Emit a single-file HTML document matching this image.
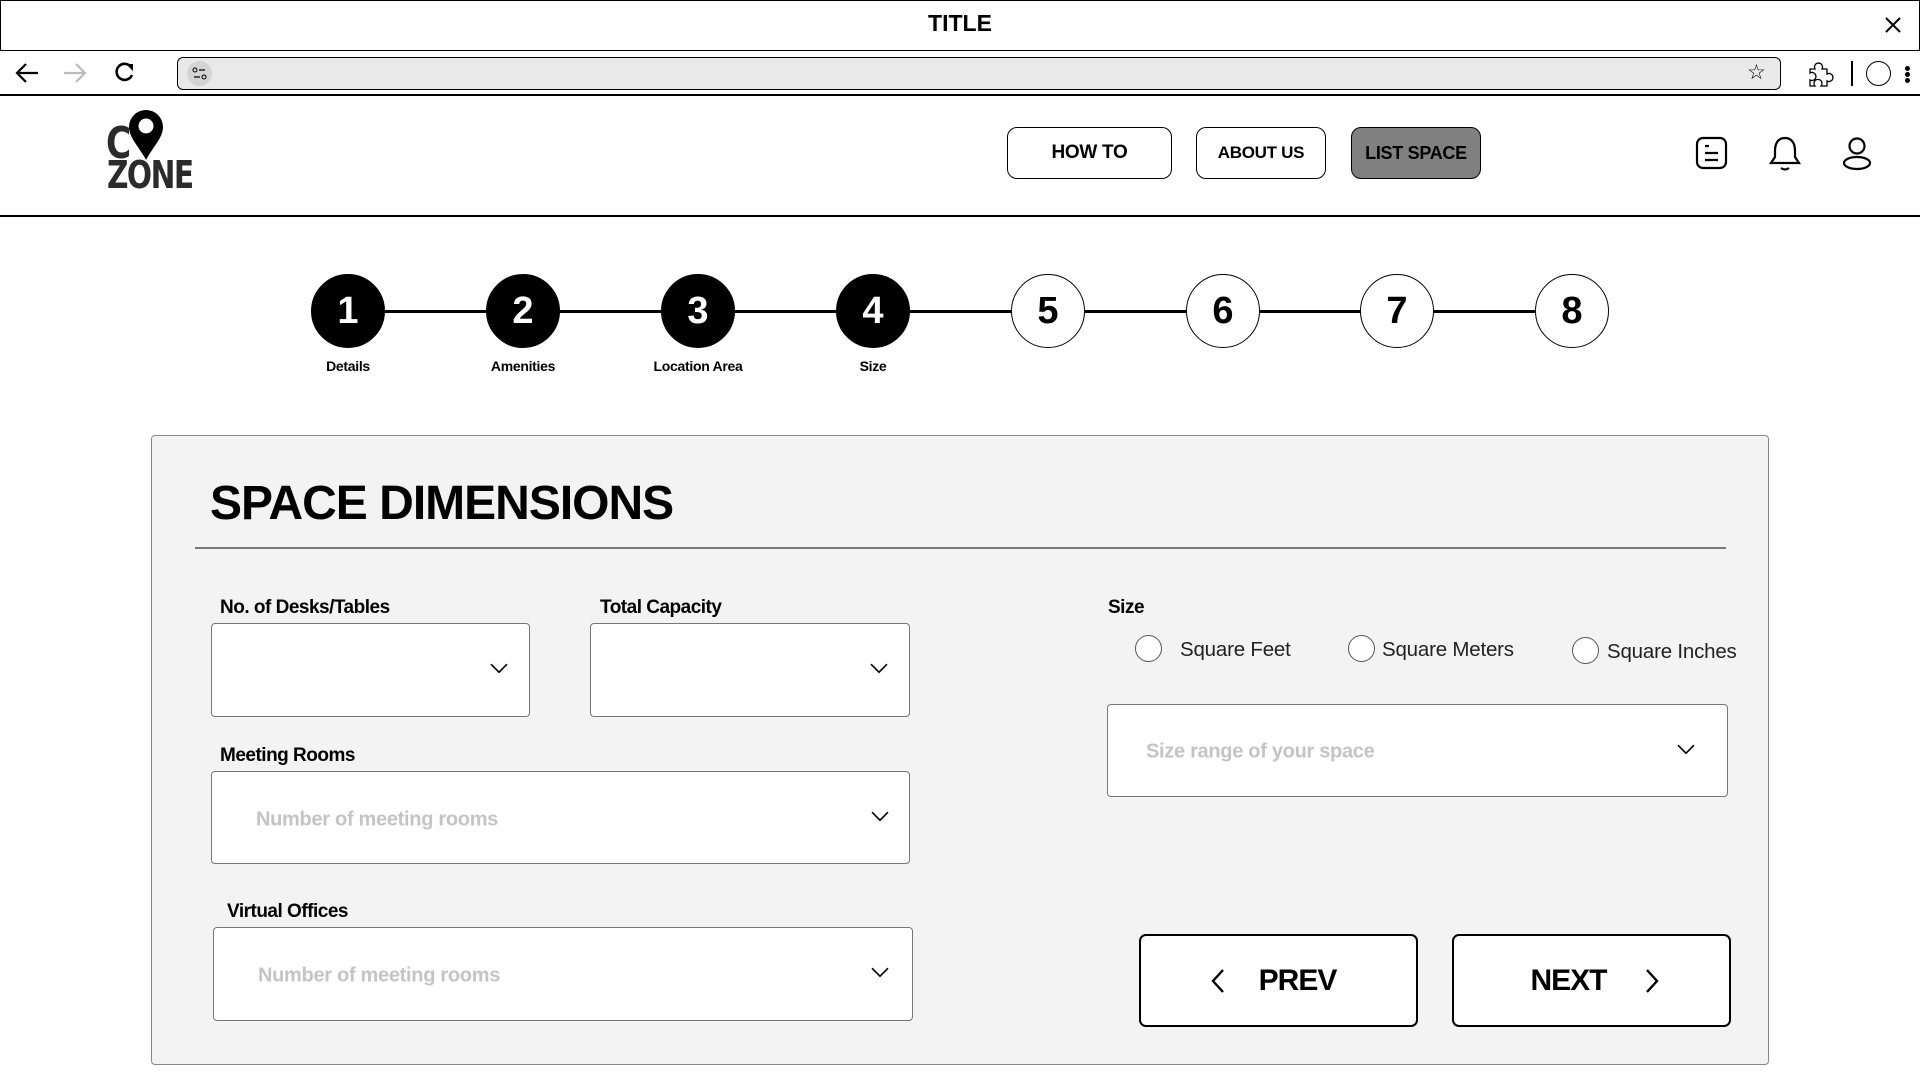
<!DOCTYPE html>
<html><head><meta charset="utf-8"><style>
*{box-sizing:border-box;margin:0;padding:0}
body{width:1920px;height:1080px;position:relative;background:#fff;font-family:"Liberation Sans",sans-serif;overflow:hidden;color:#000}
.a{position:absolute}
.btn{position:absolute;border:1.5px solid #000;border-radius:10px;display:flex;align-items:center;justify-content:center;font-weight:bold;font-size:19px;letter-spacing:-0.3px}
.step{position:absolute;width:74px;height:74px;border-radius:50%;border:1.5px solid #000;display:flex;align-items:center;justify-content:center;font-weight:bold;font-size:38px;background:#fff}
.step.f{background:#000;color:#fff}
.lbl{position:absolute;font-size:14px;font-weight:bold;transform:translateX(-50%);white-space:nowrap;letter-spacing:-0.3px}
.fl{position:absolute;font-size:19px;font-weight:bold;letter-spacing:-0.5px}
.sel{position:absolute;background:#fff;border:1.5px solid #777;border-radius:4px}
.ph{position:absolute;color:#c4c4c4;font-weight:bold;font-size:20px;letter-spacing:-0.3px;top:50%;transform:translateY(-50%)}
.chev{position:absolute;top:50%;transform:translateY(-65%)}
.radio{position:absolute;width:27px;height:27px;border-radius:50%;border:1px solid #555;background:#fff}
.rt{position:absolute;font-size:20.5px;color:#222;letter-spacing:-0.2px}
.nav{position:absolute;border:2px solid #000;border-radius:7px;background:#fff;display:flex;align-items:center;justify-content:center;font-weight:bold;font-size:30px;letter-spacing:-1px}
</style></head><body>
<div class="a" style="left:0;top:0;width:1920px;height:51px;border:1.5px solid #000"></div>
<div class="a" style="left:0;top:10px;width:1920px;text-align:center;font-size:23px;font-weight:bold">TITLE</div>
<svg class="a" style="left:1884px;top:16px" width="18" height="18"><path d="M2 2L16 16M16 2L2 16" stroke="#000" stroke-width="2"/></svg>
<svg class="a" style="left:14px;top:62px" width="26" height="22"><path d="M24 11H3M12 2L3 11L12 20" stroke="#000" stroke-width="2.2" fill="none"/></svg>
<svg class="a" style="left:62px;top:62px" width="26" height="22"><path d="M2 11H23M14 2L23 11L14 20" stroke="#bbb" stroke-width="2.2" fill="none"/></svg>
<svg class="a" style="left:114px;top:61px" width="22" height="22"><path d="M17 6A8 8 0 1 0 18 14" stroke="#000" stroke-width="2.6" fill="none"/><path d="M12 3H19V10Z" fill="#000"/></svg>
<div class="a" style="left:177px;top:57px;width:1604px;height:33px;background:#e9e9e9;border:1.5px solid #000;border-radius:6px"></div>
<div class="a" style="left:187px;top:61px;width:25px;height:25px;border-radius:50%;background:#d4d4d4"></div>
<svg class="a" style="left:191px;top:65px" width="17" height="17"><circle cx="4" cy="5" r="2" stroke="#000" fill="none"/><path d="M8 5H14M3 12H9" stroke="#000" stroke-width="1.3"/><circle cx="13" cy="12" r="2" stroke="#000" fill="none"/></svg>
<div class="a" style="left:1747px;top:60px;font-size:21px">☆</div>
<svg class="a" style="left:1806px;top:60px" width="28" height="28"><path d="M4 9H9A4 4 0 1 1 16 9H21V14A4 4 0 1 1 21 21V26H15A4 4 0 1 0 9 26H4V20A4 4 0 1 0 4 13Z" stroke="#000" stroke-width="1.3" fill="none"/></svg>
<div class="a" style="left:1851px;top:61px;width:2px;height:25px;background:#000"></div>
<div class="a" style="left:1866px;top:61px;width:25px;height:25px;border-radius:50%;border:1.3px solid #000"></div>
<div class="a" style="left:1905px;top:66px;width:5px;height:5px;border-radius:50%;background:#000;box-shadow:0 6px 0 #000,0 12px 0 #000"></div>
<div class="a" style="left:0;top:94px;width:1920px;height:2px;background:#000"></div>
<div class="a" style="left:106px;top:118px;font-family:'DejaVu Sans',sans-serif;font-weight:bold;font-size:44px;color:#2b2b2b;transform:scaleX(0.78);transform-origin:left">C</div>
<svg class="a" style="left:126px;top:108px" width="40" height="54"><path d="M20 2A17 17 0 0 1 37 19C37 30 26 40 20 52C14 40 3 30 3 19A17 17 0 0 1 20 2Z" fill="#000"/><circle cx="20" cy="18" r="7.5" fill="#fff"/></svg>
<div class="a" style="left:107px;top:155px;font-family:'DejaVu Sans',sans-serif;font-weight:bold;font-size:38px;color:#2b2b2b;letter-spacing:-2px;transform:scaleX(0.78);transform-origin:left;line-height:40px">ZONE</div>
<div class="btn" style="left:1007px;top:127px;width:165px;height:52px">HOW TO</div>
<div class="btn" style="left:1196px;top:127px;width:130px;height:52px;font-size:17px">ABOUT US</div>
<div class="btn" style="left:1351px;top:127px;width:130px;height:52px;background:#808080;font-size:18px">LIST SPACE</div>
<svg class="a" style="left:1695px;top:136px" width="34" height="34"><rect x="2" y="2" width="29" height="30" rx="6" stroke="#000" stroke-width="2.2" fill="none"/><path d="M10 10H14M10 17H23M10 24H23" stroke="#000" stroke-width="2.2"/></svg>
<svg class="a" style="left:1768px;top:136px" width="34" height="38"><path d="M17 2C9 2 7 9 7 15V21L3 27H31L27 21V15C27 9 25 2 17 2Z" stroke="#000" stroke-width="2.2" fill="none"/><path d="M13 32Q17 35 21 32" stroke="#000" stroke-width="2.2" fill="none"/></svg>
<svg class="a" style="left:1840px;top:136px" width="34" height="36"><circle cx="17" cy="10" r="7.5" stroke="#000" stroke-width="2.2" fill="none"/><ellipse cx="17" cy="27" rx="13" ry="6" stroke="#000" stroke-width="2.2" fill="none"/></svg>
<div class="a" style="left:0;top:215px;width:1920px;height:2px;background:#000"></div>
<div class="a" style="left:348px;top:310px;width:1224px;height:3px;background:#000"></div>
<div class="step f" style="left:311px;top:274px">1</div>
<div class="step f" style="left:486px;top:274px">2</div>
<div class="step f" style="left:661px;top:274px">3</div>
<div class="step f" style="left:836px;top:274px">4</div>
<div class="step" style="left:1011px;top:274px">5</div>
<div class="step" style="left:1186px;top:274px">6</div>
<div class="step" style="left:1360px;top:274px">7</div>
<div class="step" style="left:1535px;top:274px">8</div>
<div class="lbl" style="left:348px;top:358px">Details</div>
<div class="lbl" style="left:523px;top:358px">Amenities</div>
<div class="lbl" style="left:698px;top:358px">Location Area</div>
<div class="lbl" style="left:873px;top:358px">Size</div>
<div class="a" style="left:151px;top:435px;width:1618px;height:630px;background:#f3f3f3;border:1.5px solid #888;border-radius:4px"></div>
<div class="a" style="left:210px;top:476px;font-size:48px;font-weight:bold;letter-spacing:-1px">SPACE DIMENSIONS</div>
<div class="a" style="left:195px;top:547px;width:1531px;height:1.5px;background:#777"></div>
<div class="fl" style="left:220px;top:597px">No. of Desks/Tables</div>
<div class="fl" style="left:600px;top:597px">Total Capacity</div>
<div class="sel" style="left:211px;top:623px;width:319px;height:94px"><svg class="chev" style="left:278px" width="18" height="12"><path d="M1 2L9 10L17 2" stroke="#000" stroke-width="1.6" fill="none"/></svg></div>
<div class="sel" style="left:590px;top:623px;width:320px;height:94px"><svg class="chev" style="left:279px" width="18" height="12"><path d="M1 2L9 10L17 2" stroke="#000" stroke-width="1.6" fill="none"/></svg></div>
<div class="fl" style="left:220px;top:745px">Meeting Rooms</div>
<div class="sel" style="left:211px;top:771px;width:699px;height:93px"><div class="ph" style="left:44px;margin-top:2px">Number of meeting rooms</div><svg class="chev" style="left:659px" width="18" height="12"><path d="M1 2L9 10L17 2" stroke="#000" stroke-width="1.6" fill="none"/></svg></div>
<div class="fl" style="left:227px;top:901px">Virtual Offices</div>
<div class="sel" style="left:213px;top:927px;width:700px;height:94px"><div class="ph" style="left:44px;margin-top:2px">Number of meeting rooms</div><svg class="chev" style="left:657px" width="18" height="12"><path d="M1 2L9 10L17 2" stroke="#000" stroke-width="1.6" fill="none"/></svg></div>
<div class="fl" style="left:1108px;top:597px">Size</div>
<div class="radio" style="left:1135px;top:635px"></div><div class="rt" style="left:1180px;top:638px">Square Feet</div>
<div class="radio" style="left:1348px;top:635px"></div><div class="rt" style="left:1382px;top:638px">Square Meters</div>
<div class="radio" style="left:1572px;top:637px"></div><div class="rt" style="left:1607px;top:640px">Square Inches</div>
<div class="sel" style="left:1107px;top:704px;width:621px;height:93px"><div class="ph" style="left:38px;margin-top:1px">Size range of your space</div><svg class="chev" style="left:569px" width="18" height="12"><path d="M1 2L9 10L17 2" stroke="#000" stroke-width="1.6" fill="none"/></svg></div>
<div class="nav" style="left:1139px;top:934px;width:279px;height:93px;padding-right:10px"><svg style="margin-right:34px" width="14" height="26"><path d="M12 2L2 13L12 24" stroke="#000" stroke-width="2.4" fill="none"/></svg>PREV</div>
<div class="nav" style="left:1452px;top:934px;width:279px;height:93px;padding-left:6px">NEXT<svg style="margin-left:38px" width="14" height="26"><path d="M2 2L12 13L2 24" stroke="#000" stroke-width="2.4" fill="none"/></svg></div>
</body></html>
